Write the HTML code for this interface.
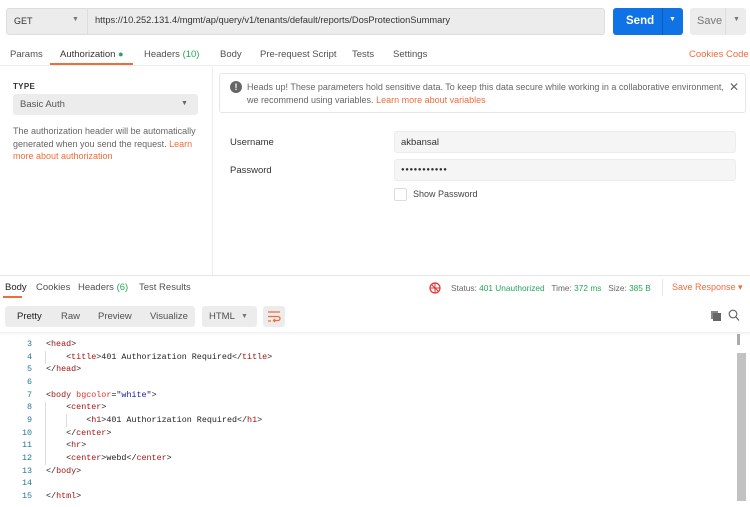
<!DOCTYPE html>
<html><head><style>
*{box-sizing:border-box;margin:0;padding:0}
body{width:750px;height:507px;overflow:hidden;background:#fff;font-family:"Liberation Sans",sans-serif;font-size:10px;color:#505050;position:relative}
.a{position:absolute;white-space:nowrap}
.or{color:#f26b3a}
.gr{color:#26a65b}
.mono{font-family:"Liberation Mono",monospace;font-size:8.4px;color:#222}
.t{color:#a31515}.at{color:#e03030}.v{color:#1a1aa6}
.tab{font-size:9.5px;top:49px}
</style></head><body>
<div class="a" style="left:6px;top:8px;width:599px;height:27px;background:#ececec;border:1px solid #ddd;border-radius:3px"></div>
<div class="a" style="left:87px;top:8px;width:1px;height:27px;background:#ddd"></div>
<div class="a" style="left:14px;top:16px;font-size:9px;color:#333">GET</div>
<div class="a" style="left:72px;top:16px;font-size:7px;color:#777">▼</div>
<div class="a" style="left:95px;top:15px;font-size:9.3px;color:#333">https://10.252.131.4/mgmt/ap/query/v1/tenants/default/reports/DosProtectionSummary</div>
<div class="a" style="left:613px;top:8px;width:70px;height:27px;background:#0f72e5;border-radius:3px"></div>
<div class="a" style="left:662px;top:8px;width:1px;height:27px;background:#0a5bc0"></div>
<div class="a" style="left:626px;top:15px;font-size:11.5px;color:#fff;font-weight:bold">Send</div>
<div class="a" style="left:669px;top:16px;font-size:7px;color:#fff">▼</div>
<div class="a" style="left:690px;top:8px;width:56px;height:27px;background:#ececec;border-radius:3px"></div>
<div class="a" style="left:725px;top:8px;width:1px;height:27px;background:#ddd"></div>
<div class="a" style="left:697px;top:15px;font-size:11px;color:#777">Save</div>
<div class="a" style="left:733px;top:16px;font-size:7px;color:#777">▼</div>
<div class="a tab" style="left:10px">Params</div>
<div class="a tab" style="left:60px;color:#333">Authorization <span class="gr" style="font-size:9px">●</span></div>
<div class="a" style="left:50px;top:63px;width:83px;height:2px;background:#f26b3a"></div>
<div class="a tab" style="left:144px">Headers <span class="gr">(10)</span></div>
<div class="a tab" style="left:220px">Body</div>
<div class="a tab" style="left:260px">Pre-request Script</div>
<div class="a tab" style="left:352px">Tests</div>
<div class="a tab" style="left:393px">Settings</div>
<div class="a or tab" style="left:689px">Cookies</div>
<div class="a or tab" style="left:726px">Code</div>
<div class="a" style="left:0;top:65px;width:750px;height:1px;background:#eee"></div>
<div class="a" style="left:212px;top:66px;width:1px;height:209px;background:#eee"></div>
<div class="a" style="left:13px;top:82px;font-size:8px;color:#333;font-weight:bold;letter-spacing:.3px">TYPE</div>
<div class="a" style="left:13px;top:94px;width:185px;height:21px;background:#ececec;border-radius:3px"></div>
<div class="a" style="left:20px;top:99px;font-size:9.5px;color:#555">Basic Auth</div>
<div class="a" style="left:181px;top:100px;font-size:7px;color:#666">▼</div>
<div class="a" style="left:13px;top:125px;white-space:normal;width:200px;font-size:9px;line-height:12.6px;color:#666">The authorization header will be automatically<br>generated when you send the request. <span class="or">Learn<br>more about authorization</span></div>
<div class="a" style="left:219px;top:73px;width:527px;height:40px;border:1px solid #e6e6e6;border-radius:3px"></div>
<div class="a" style="left:230px;top:81px;width:12px;height:12px;border-radius:50%;background:#666;color:#fff;font-size:9px;font-weight:bold;text-align:center;line-height:12px">!</div>
<div class="a" style="left:247px;top:81px;font-size:9px;line-height:12.5px;color:#666">Heads up! These parameters hold sensitive data. To keep this data secure while working in a collaborative environment,<br>we recommend using variables. <span class="or">Learn more about variables</span></div>
<div class="a" style="left:729px;top:80px;font-size:12px;color:#666">✕</div>
<div class="a" style="left:230px;top:137px;font-size:9.5px;color:#333">Username</div>
<div class="a" style="left:230px;top:165px;font-size:9.5px;color:#333">Password</div>
<div class="a" style="left:394px;top:131px;width:342px;height:22px;background:#f5f5f5;border:1px solid #ececec;border-radius:3px"></div>
<div class="a" style="left:401px;top:137px;font-size:9.5px;color:#333">akbansal</div>
<div class="a" style="left:394px;top:159px;width:342px;height:22px;background:#f5f5f5;border:1px solid #ececec;border-radius:3px"></div>
<div class="a" style="left:401px;top:164px;font-size:6px;line-height:12px;color:#333;letter-spacing:0.6px">●●●●●●●●●●●</div>
<div class="a" style="left:394px;top:188px;width:13px;height:13px;border:1px solid #ddd;border-radius:2px"></div>
<div class="a" style="left:413px;top:189px;font-size:9px;color:#444">Show Password</div>
<div class="a" style="left:0;top:275px;width:750px;height:1px;background:#e6e6e6"></div>
<div class="a" style="top:282px;left:5px;font-size:9.5px;color:#222">Body</div>
<div class="a" style="left:3px;top:296px;width:19px;height:2px;background:#f26b3a"></div>
<div class="a" style="top:282px;left:36px;font-size:9.5px">Cookies</div>
<div class="a" style="top:282px;left:78px;font-size:9.5px">Headers <span class="gr">(6)</span></div>
<div class="a" style="top:282px;left:139px;font-size:9.5px">Test Results</div>
<svg class="a" style="left:429px;top:282px" width="12" height="12"><circle cx="6" cy="6" r="5" stroke="#e03030" stroke-width="1.2" fill="none"/><path d="M1 6H11M6 1V11M3 3L9 9" stroke="#e03030" stroke-width="1"/></svg>
<div class="a" style="top:283px;left:451px;font-size:8.3px;color:#666">Status: <span class="gr">401 Unauthorized</span> &nbsp; Time: <span class="gr">372 ms</span> &nbsp; Size: <span class="gr">385 B</span></div>
<div class="a" style="left:662px;top:279px;width:1px;height:17px;background:#e6e6e6"></div>
<div class="a or" style="top:282px;left:672px;font-size:9px">Save Response ▾</div>
<div class="a" style="left:5px;top:306px;width:190px;height:21px;background:#ececec;border-radius:3px"></div>
<div class="a" style="left:17px;top:311px;font-size:9.5px;color:#222">Pretty</div>
<div class="a" style="left:61px;top:311px;font-size:9.5px">Raw</div>
<div class="a" style="left:98px;top:311px;font-size:9.5px">Preview</div>
<div class="a" style="left:150px;top:311px;font-size:9.5px">Visualize</div>
<div class="a" style="left:202px;top:306px;width:55px;height:21px;background:#ececec;border-radius:3px"></div>
<div class="a" style="left:209px;top:311px;font-size:9.5px">HTML</div>
<div class="a" style="left:241px;top:313px;font-size:7px;color:#777">▼</div>
<div class="a" style="left:263px;top:306px;width:22px;height:21px;background:#ececec;border-radius:3px"></div>
<svg class="a" style="left:266px;top:309px" width="16" height="15" viewBox="0 0 16 15"><path d="M2 3H14M2 7.5H12a2 2 0 0 1 0 4H8M2 12H5M9 10L7.5 11.5L9 13" stroke="#f26b3a" stroke-width="1.3" fill="none"/></svg>
<svg class="a" style="left:710px;top:310px" width="12" height="12"><rect x="1" y="1" width="7" height="8" fill="#888"/><rect x="3" y="3" width="8" height="8" fill="#666"/></svg>
<svg class="a" style="left:728px;top:309px" width="12" height="13"><circle cx="5" cy="5" r="3.8" stroke="#666" stroke-width="1.2" fill="none"/><path d="M8 8L11 11.5" stroke="#666" stroke-width="1.3"/></svg>
<div class="a" style="left:0;top:332px;width:750px;height:3px;background:linear-gradient(#eee,#fff)"></div>
<div class="a" style="left:737px;top:334px;width:3px;height:11px;background:#aaa"></div>
<div class="a" style="left:737px;top:353px;width:9px;height:148px;background:#c2c2c2"></div>
<div class="a" style="left:45px;top:351px;width:1px;height:13px;background:#ddd"></div>
<div class="a" style="left:45px;top:402px;width:1px;height:63px;background:#ddd"></div>
<div class="a" style="left:66px;top:414px;width:1px;height:13px;background:#ddd"></div>
<div class="a mono" style="left:0;top:338px;line-height:12.67px;white-space:pre"><div style="display:flex"><div style="width:32px;text-align:right;color:#237893">3<br>4<br>5<br>6<br>7<br>8<br>9<br>10<br>11<br>12<br>13<br>14<br>15</div><div style="margin-left:14px">&lt;<span class="t">head</span>&gt;
    &lt;<span class="t">title</span>&gt;401 Authorization Required&lt;/<span class="t">title</span>&gt;
&lt;/<span class="t">head</span>&gt;

&lt;<span class="t">body</span> <span class="at">bgcolor</span>=<span class="v">"white"</span>&gt;
    &lt;<span class="t">center</span>&gt;
        &lt;<span class="t">h1</span>&gt;401 Authorization Required&lt;/<span class="t">h1</span>&gt;
    &lt;/<span class="t">center</span>&gt;
    &lt;<span class="t">hr</span>&gt;
    &lt;<span class="t">center</span>&gt;webd&lt;/<span class="t">center</span>&gt;
&lt;/<span class="t">body</span>&gt;

&lt;/<span class="t">html</span>&gt;</div></div></div>
</body></html>
